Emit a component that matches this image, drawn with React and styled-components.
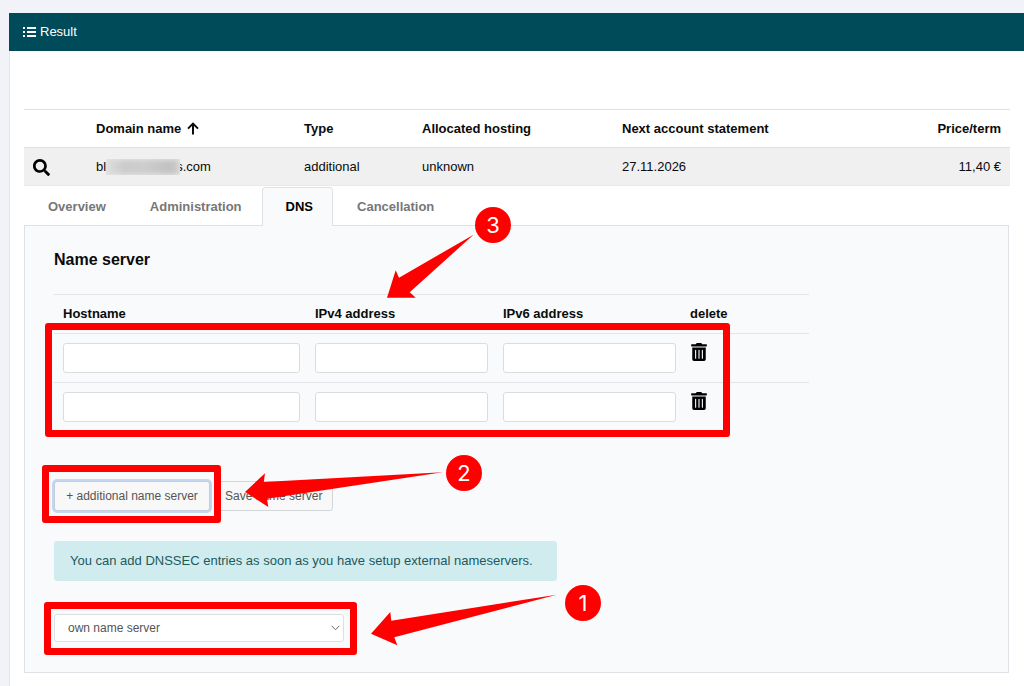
import React from "react";
import styled, { createGlobalStyle } from "styled-components";
import { FaTrashAlt, FaSearch } from "react-icons/fa";

const GlobalStyle = createGlobalStyle`
  *, *::before, *::after { box-sizing: border-box; }
  body {
    margin: 0;
    background: #f1f3f9;
    color: #0b0b0b;
    font: 13px/20px "Liberation Sans", Arial, sans-serif;
  }
  button, input, select { font: inherit; color: inherit; }
`;

const Page = styled.div`
  padding: 13px 0 0 9px;
`;

const Card = styled.main`
  min-height: calc(100vh - 13px);
  background: #fff;
  border-left: 1px solid #e3e5ea;
`;

const CardHeader = styled.header`
  display: flex;
  align-items: center;
  gap: 4px;
  height: 38px;
  margin-left: -1px;
  padding: 0 14px;
  background: #004b5a;
  color: #fff;
`;

const HeaderTitle = styled.h1`
  margin: 0;
  font-size: 13px;
  font-weight: 400;
`;

const CardBody = styled.div`
  padding: 58px 14px 12px;
`;

const DomainTable = styled.table`
  width: 100%;
  table-layout: fixed;
  border-collapse: separate;
  border-spacing: 0;

  th, td {
    height: 38px;
    padding: 0 9px;
    text-align: left;
    border-top: 1px solid #dee2e6;
    white-space: nowrap;
  }
  td {
    height: 39px;
    background: #f0f0f0;
    border-bottom: 1px solid #e6e8ea;
  }
  th:last-child, td:last-child { text-align: right; }
`;

const Col = styled.col`
  width: ${(p) => (p.$width ? `${p.$width}px` : "auto")};
`;

const SortLabel = styled.span`
  display: inline-flex;
  align-items: center;
  gap: 6px;
`;

const IconButton = styled.button`
  display: inline-flex;
  padding: 0;
  border: 0;
  background: none;
  color: #000;
  vertical-align: ${(p) => p.$align || "middle"};
`;

const DomainName = styled.span`
  display: inline-flex;
  align-items: center;
`;

const Redacted = styled.span`
  width: 74px;
  height: 16px;
  margin-right: -4px;
  z-index: 1;
  background: linear-gradient(90deg, #dedede, #cbcbcb 25%, #cdcdcd 50%, #c2c2c2 85%, #cccccc);
  box-shadow: inset 0 0 5px 1px #e4e4e4;
`;

const Tabs = styled.nav`
  display: flex;
  margin-top: 1px;
`;

const Tab = styled.a`
  height: 39px;
  padding: 9px 19px 9px 23px;
  border: 1px solid ${(p) => (p.$active ? "#dee2e6" : "transparent")};
  border-bottom: 0;
  border-radius: 4px 4px 0 0;
  background: ${(p) => (p.$active ? "#f9fafc" : "transparent")};
  color: ${(p) => (p.$active ? "#000" : "#777")};
  font-weight: 700;
  text-decoration: none;
  position: relative;
  z-index: ${(p) => (p.$active ? 1 : 0)};
  margin-bottom: -1px;
`;

const Panel = styled.section`
  position: relative;
  margin-right: 1px;
  padding: 24px 29px 30px;
  background: #f9fafc;
  border: 1px solid #dee2e6;
`;

const PanelTitle = styled.h2`
  margin: 0 0 24px;
  font-size: 16px;
  line-height: 20px;
`;

const ServerTable = styled.table`
  width: 100%;
  max-width: 755px;
  table-layout: fixed;
  border-collapse: separate;
  border-spacing: 0;

  th, td {
    padding: 9px 6px 9px 9px;
    border-top: 1px solid #e1e4e8;
    text-align: left;
    vertical-align: top;
  }
  th:last-child, td:last-child { padding-left: 8px; }
`;

const TextInput = styled.input`
  display: block;
  width: 100%;
  height: 30px;
  padding: 0 8px;
  border: 1px solid #d9dde1;
  border-radius: 3px;
  background: #fff;
`;

const Actions = styled.div`
  display: flex;
  gap: 4px;
  margin-top: 50px;
`;

const Button = styled.button`
  height: 30px;
  padding: 0 10px;
  border: 1px solid ${(p) => (p.$focused ? "#c3cddb" : "#d3d6d9")};
  border-radius: 3px;
  background: #f8f8f8;
  box-shadow: ${(p) => (p.$focused ? "0 0 0 2px #c3d7f2" : "none")};
  color: #555;
  font-size: 12px;
  min-width: ${(p) => p.$min}px;
`;

const Notice = styled.p`
  width: fit-content;
  min-width: 503px;
  margin: 30px 0 33px;
  padding: 10px 16px;
  border-radius: 3px;
  background: #d1ecef;
  color: #1c5a5c;
`;

const SelectWrap = styled.div`
  display: grid;
  align-items: center;
  width: 290px;
  color: #555;

  > * { grid-area: 1 / 1; }
  > svg { justify-self: end; margin-right: 4px; pointer-events: none; }
`;

const Select = styled.select`
  appearance: none;
  width: 100%;
  height: 28px;
  padding: 0 24px 0 13px;
  border: 1px solid #dcdfe4;
  border-radius: 3px;
  background: #fff;
  font-size: 12px;
`;

const Frame = styled.div`
  position: absolute;
  left: ${(p) => p.$x}px;
  top: ${(p) => p.$y}px;
  width: ${(p) => p.$w}px;
  height: ${(p) => p.$h}px;
  border: 7px solid #f00;
  border-radius: 3px;
  pointer-events: none;
`;

const Arrows = styled.svg`
  position: absolute;
  left: 0;
  top: 0;
  pointer-events: none;
`;

const Badge = styled.span`
  position: absolute;
  left: ${(p) => p.$x}px;
  top: ${(p) => p.$y}px;
  width: 36px;
  height: 36px;
  border-radius: 50%;
  background: #f00;
  color: #fff;
  font: 22px/36px Inter, sans-serif;
  text-align: center;
`;

const ListIcon = () => (
  <svg width="13" height="12" viewBox="0 0 13 12" fill="currentColor" aria-hidden="true">
    <path d="M0 1h2v2H0zM4 1h9v2H4zM0 5h2v2H0zM4 5h9v2H4zM0 9h2v2H0zM4 9h9v2H4z" />
  </svg>
);

const SortUpIcon = () => (
  <svg width="12" height="13" viewBox="0 0 12 13" fill="none" stroke="currentColor" strokeWidth="2" aria-hidden="true">
    <path d="M6 12.5V1.8M1 6.6 6 1.6 11 6.6" />
  </svg>
);

const serverRows = [1, 2];
const tabs = ["Overview", "Administration", "DNS", "Cancellation"];

export default function App() {
  return (
    <Page>
      <GlobalStyle />
      <Card>
        <CardHeader>
          <ListIcon />
          <HeaderTitle>Result</HeaderTitle>
        </CardHeader>
        <CardBody>
          <DomainTable>
            <colgroup>
              <Col $width={63} />
              <Col $width={208} />
              <Col $width={118} />
              <Col $width={200} />
              <Col $width={200} />
              <Col />
            </colgroup>
            <thead>
              <tr>
                <th aria-label="Details" />
                <th><SortLabel>Domain name <SortUpIcon /></SortLabel></th>
                <th>Type</th>
                <th>Allocated hosting</th>
                <th>Next account statement</th>
                <th>Price/term</th>
              </tr>
            </thead>
            <tbody>
              <tr>
                <td>
                  <IconButton type="button" aria-label="Show details">
                    <FaSearch size={17} />
                  </IconButton>
                </td>
                <td><DomainName>bl<Redacted />s.com</DomainName></td>
                <td>additional</td>
                <td>unknown</td>
                <td>27.11.2026</td>
                <td>11,40 €</td>
              </tr>
            </tbody>
          </DomainTable>

          <Tabs>
            {tabs.map((name) => (
              <Tab key={name} href="#" $active={name === "DNS"}>{name}</Tab>
            ))}
          </Tabs>

          <Panel>
            <PanelTitle>Name server</PanelTitle>
            <ServerTable>
              <colgroup>
                <Col $width={252} />
                <Col $width={188} />
                <Col $width={188} />
                <Col />
              </colgroup>
              <thead>
                <tr>
                  <th>Hostname</th>
                  <th>IPv4 address</th>
                  <th>IPv6 address</th>
                  <th>delete</th>
                </tr>
              </thead>
              <tbody>
                {serverRows.map((n) => (
                  <tr key={n}>
                    <td><TextInput aria-label={`Hostname ${n}`} /></td>
                    <td><TextInput aria-label={`IPv4 address ${n}`} /></td>
                    <td><TextInput aria-label={`IPv6 address ${n}`} /></td>
                    <td>
                      <IconButton type="button" $align="top" aria-label={`Delete name server ${n}`}>
                        <FaTrashAlt size={18} />
                      </IconButton>
                    </td>
                  </tr>
                ))}
              </tbody>
            </ServerTable>

            <Actions>
              <Button type="button" $focused $min={156}>+ additional name server</Button>
              <Button type="button" $min={119}>Save name server</Button>
            </Actions>

            <Notice>You can add DNSSEC entries as soon as you have setup external nameservers.</Notice>

            <SelectWrap>
              <Select aria-label="Name server type" defaultValue="own">
                <option value="own">own name server</option>
              </Select>
              <svg width="9" height="6" viewBox="0 0 9 6" fill="none" stroke="#666">
                <path d="M0.7 0.8 4.5 4.8 8.3 0.8" />
              </svg>
            </SelectWrap>

            <Frame $x={20} $y={97} $w={685} $h={114} />
            <Frame $x={17} $y={239} $w={179} $h={58} />
            <Frame $x={19} $y={376} $w={313} $h={53} />
            <Arrows width="600" height="440" viewBox="25 226 600 440" fill="#f00">
              <path d="M473.5 234.7 399 277.7 395.7 270.3 387 297.8H415.8L409.7 292.3Z" />
              <path d="M442.7 472.3 263.8 482 265 473.3 245 492 268.3 507 267 498.7Z" />
              <path d="M556.7 594.7 391.3 620.7 390.3 612 371 633.7 397.3 645.3 394.3 637.3Z" />
            </Arrows>
            <Badge $x={450} $y={-19}>3</Badge>
            <Badge $x={421} $y={229}>2</Badge>
            <Badge $x={540} $y={359}>1</Badge>
          </Panel>
        </CardBody>
      </Card>
    </Page>
  );
}
